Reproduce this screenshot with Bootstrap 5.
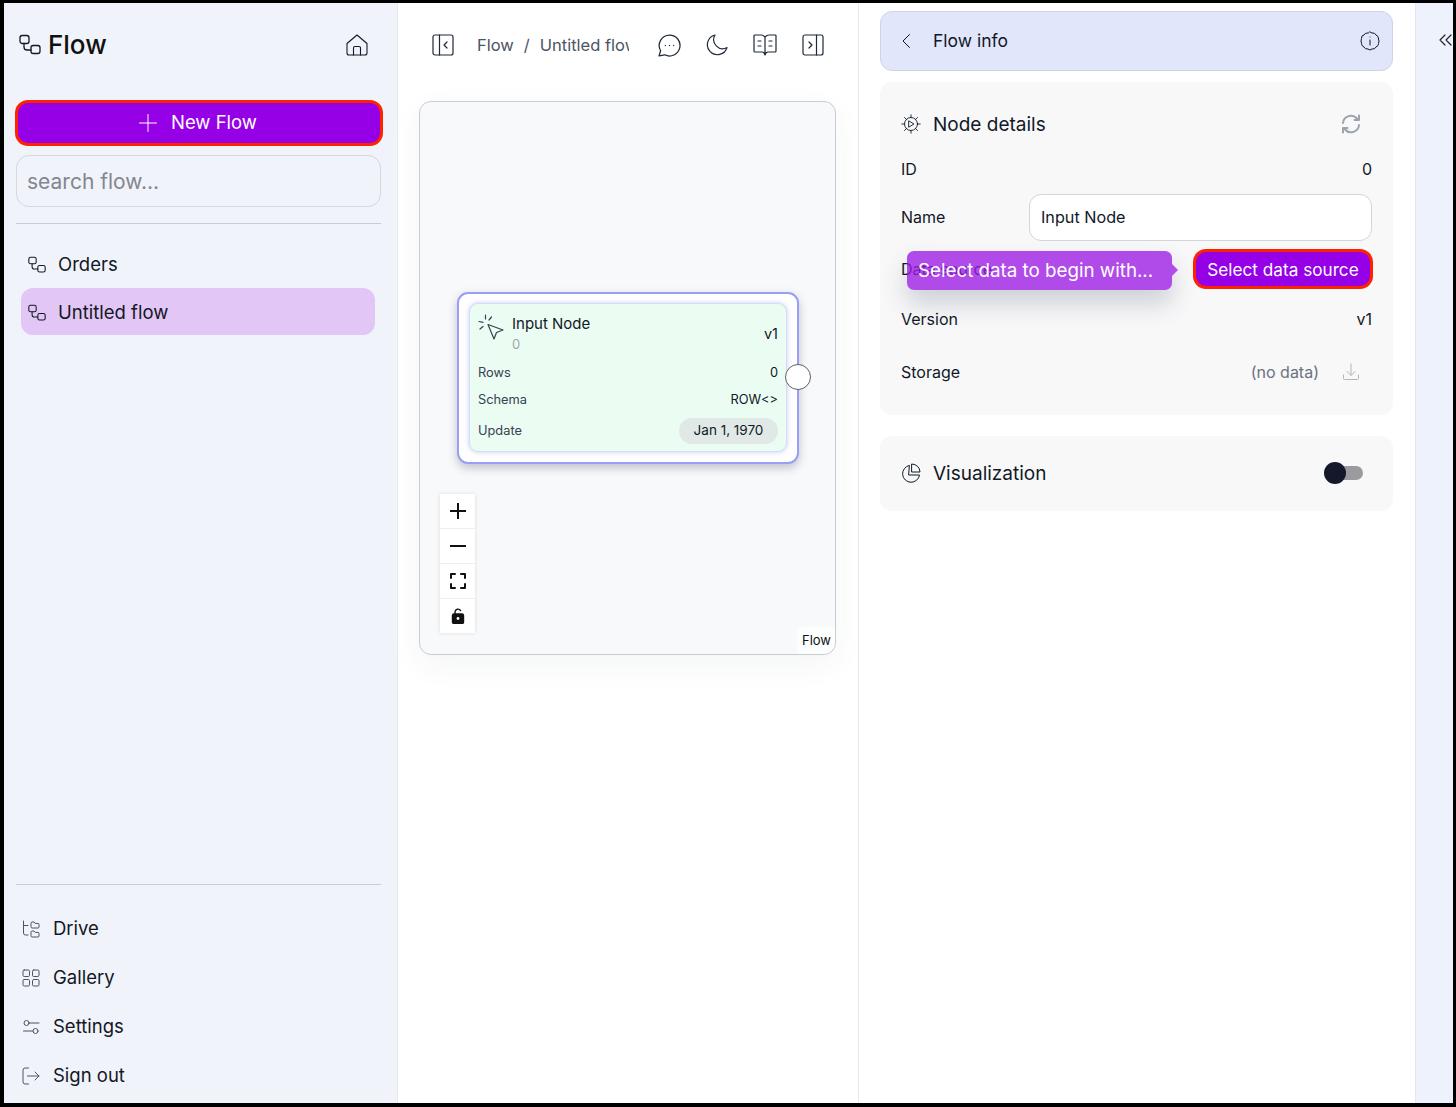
<!DOCTYPE html>
<html lang="en">
<head>
    <meta charset="UTF-8">
    <meta name="viewport" content="width=device-width, initial-scale=1">
    <title>Flow</title>
    <link rel="stylesheet" href="https://cdn.jsdelivr.net/npm/bootstrap@5.3.3/dist/css/bootstrap.min.css">
    <style>
        html, body { height: 100%; }
        body { font-family: Inter, "Liberation Sans", sans-serif; color: #111827; background: #fff; overflow: hidden; }
        svg { display: block; flex: none; fill: none; stroke: currentColor; stroke-linecap: round; stroke-linejoin: round; }

        .app-frame { height: 1107px; border: solid #000; border-width: 3px 3px 4px 4px; display: flex; }

        .side-pane { width: 394px; flex: none; background: #f1f3fb; border-right: 1px solid #e7e9f1; padding: 0 12px; display: flex; flex-direction: column; }
        .brand-row { height: 97px; flex: none; padding: 0 16px 13px 3px; }
        .brand-logo { gap: 7px; }
        .brand-name { font-size: 26px; font-weight: 500; color: #111; line-height: 1; }
        .new-flow { height: 46px; width: 368px; flex: none; margin-left: -1px; padding-right: 14px; background: #9500e6; border: 3px solid #ff2200; border-radius: 13px; color: #fff; font-size: 18.5px; font-weight: 400; }
        .new-flow:hover { background: #9500e6; color: #fff; border-color: #ff2200; }
        .new-flow-text { margin-left: 14px; }
        .search-flow { height: 52px; width: 365px; flex: none; margin-top: 9px; border: 1.5px solid #d5d7dd; border-radius: 13px; background: transparent; font-size: 21px; padding: 0 10px; }
        .search-flow::placeholder { color: #83868e; }
        .side-rule { width: 365px; margin: 16px 0 0; border-top: 1px solid #8f9299; opacity: .4; }
        .flow-list { width: 354px; margin: 16px 0 0 5px; }
        .flow-item { height: 47px; margin-bottom: 1px; padding: 3px 7px 0; border-radius: 12px; font-size: 18.5px; gap: 12px; color: #14171f; }
        .flow-item.is-active { background: #e2c6f5; }
        .side-foot { margin-top: auto; width: 365px; }
        .foot-list { padding: 19px 0 3px 6px; }
        .foot-item { height: 49px; gap: 13px; font-size: 18.5px; color: #14171f; }
        .foot-icon { color: #4b5563; }

        .main-pane { width: 461px; flex: none; border-right: 1px solid #e9eaee; padding: 0 22px 0 21px; }
        .top-tools { height: 98px; padding: 0 12px 14px 13px; color: #1f2937; }
        .crumbs { width: 152px; overflow: hidden; white-space: nowrap; color: #4b5563; font-size: 16.5px; margin-left: 23px; }
        .crumb-sep { margin: 0 10px; }
        .tool-icons { gap: 25px; }
        .flow-canvas { position: relative; width: 417px; height: 554px; background: #f8f9fb; border: 1px solid #c9ccd3; border-radius: 12px; box-shadow: 0 10px 30px rgba(40, 50, 70, .05); }
        .node-shell { position: absolute; left: 37px; top: 190px; width: 342px; height: 172px; background: #fff; border: 2px solid #9a9ef4; border-radius: 11px; box-shadow: 0 4px 10px rgba(60, 70, 90, .3); padding: 9px 10px; }
        .node-card { height: 149px; background: #ebfcf3; border: 1px solid #d5dcf4; border-radius: 9px; box-shadow: 0 0 5px rgba(120, 125, 240, .4); padding: 10px 8px 0; font-size: 12.8px; color: #374151; }
        .node-title { font-size: 15px; color: #111827; line-height: 20px; }
        .node-ver { font-size: 14.5px; color: #111827; }
        .node-id { color: #a3a7ae; font-size: 13px; line-height: 20px; }
        .node-head { height: 39px; margin-bottom: 6px; }
        .node-line { height: 27px; }
        .node-line strong { font-weight: 400; color: #111827; }
        .date-pill { background: #e1e9e6; color: #111827; border-radius: 13px; height: 26px; width: 99px; font-size: 13.5px; display: flex; align-items: center; justify-content: center; }
        .node-port { position: absolute; left: 326px; top: 70px; width: 26px; height: 26px; background: #fff; border: 1.3px solid #5d6169; border-radius: 50%; }
        .zoom-tools { position: absolute; left: 20px; top: 392px; width: 35px; box-shadow: 0 0 4px rgba(0, 0, 0, .12); background: #eee; }
        .zoom-btn { height: 34px; background: #fff; margin-bottom: 1px; color: #111; }
        .zoom-btn:last-child { margin-bottom: 0; }
        .canvas-tag { position: absolute; right: 0; bottom: 0; padding: 4px 4px 5px 5px; background: rgba(255, 255, 255, .6); font-size: 13px; line-height: 18px; color: #111; border-radius: 4px 0 12px 0; }

        .info-pane { width: 556px; flex: none; padding: 8px 22px 0 21px; }
        .info-head { height: 60px; background: #e1e6fb; border: 1px solid #ced4e8; border-radius: 12px; padding: 0 12px 0 20px; font-size: 17.5px; margin-bottom: 11px; }
        .info-label { margin-left: 22px; }
        .detail-box { position: relative; background: #f8f8f9; border-radius: 12px; height: 333px; padding: 0 21px; font-size: 16px; margin-bottom: 21px; }
        .detail-title { height: 84px; padding: 2px 11px 0 0; font-size: 19px; }
        .detail-title svg { margin-top: -2px; }
        .title-text { margin-left: 12px; }
        .row-id { height: 24px; margin-top: -9px; }
        .row-name { height: 46px; margin-top: 13px; }
        .name-input { width: 343px; height: 47px; border: 1.5px solid #d3d5da; border-radius: 12px; background: #fff; font-size: 16.2px; padding: 0 11px; color: #111827; }
        .row-source { height: 40px; margin-top: 9px; }
        .source-btn { height: 40px; width: 180px; margin-right: -1px; padding: 1px 0 0; background: #9500e6; border: 3px solid #ff2200; border-radius: 13px; color: #fff; font-size: 17.2px; }
        .source-btn:hover { background: #9500e6; color: #fff; border-color: #ff2200; }
        .row-version { height: 24px; margin-top: 18px; }
        .row-storage { height: 24px; margin-top: 29px; }
        .no-data { color: #6b7280; margin-right: 23px; }
        .storage-icon { color: #b0b4bb; margin-right: 12px; }
        .hint-tip { position: absolute; left: 27px; top: 169px; width: 265px; height: 39px; padding: 1px 0 0 11px; background: rgba(155, 25, 230, .78); color: #fff; border-radius: 7px; font-size: 18.75px; white-space: nowrap; box-shadow: 0 14px 24px rgba(60, 70, 90, .22); }
        .hint-tip::after { content: ""; position: absolute; left: 100%; top: 13px; border: 6px solid transparent; border-left-color: #b14bec; }
        .viz-box { background: #f8f8f9; border-radius: 12px; height: 75px; padding: 2px 30px 0 21px; font-size: 19px; }
        .viz-icon { margin-top: -3px; }
        .viz-switch { position: relative; width: 30px; height: 14px; margin-top: -4px; background: #9b9b9f; border-radius: 7px; }
        .viz-switch::before { content: ""; position: absolute; left: -9px; top: -4px; width: 22px; height: 22px; border-radius: 50%; background: #14182a; }

        .edge-pane { flex: 1; background: #eef2fd; border-left: 1px solid #e3e7f4; overflow: hidden; position: relative; }
        .edge-arrow { position: absolute; left: 23px; top: 31px; color: #222; }
    </style>
</head>
<body>
    <div class="app-frame">

        <aside class="side-pane">
            <div class="brand-row d-flex align-items-center justify-content-between">
                <div class="brand-logo d-flex align-items-center">
                    <svg width="22" height="22" viewBox="0 0 22 22" stroke-width="1.3"><rect x="1" y="1.5" width="9" height="8" rx="2.2"/><rect x="12" y="11.5" width="9" height="8" rx="2.2"/><path d="M5 9.5v3.5a3 3 0 0 0 3 3h4"/></svg>
                    <span class="brand-name">Flow</span>
                </div>
                <svg width="24" height="24" viewBox="0 0 24 24" stroke-width="1.1"><path d="M2 20V10.5L12 2l10 8.5V20a2 2 0 0 1-2 2H4a2 2 0 0 1-2-2z"/><path d="M8.5 22v-7a1.5 1.5 0 0 1 1.5-1.5h4a1.5 1.5 0 0 1 1.5 1.5v7"/></svg>
            </div>

            <button class="btn new-flow d-flex align-items-center justify-content-center" type="button">
                <svg width="18" height="18" viewBox="0 0 18 18" stroke-width="1"><path d="M9 .5v17M.5 9h17"/></svg>
                <span class="new-flow-text">New Flow</span>
            </button>
            <input class="form-control search-flow" type="text" placeholder="search flow...">
            <hr class="side-rule">

            <div class="flow-list">
                <div class="flow-item d-flex align-items-center">
                    <svg width="18" height="18" viewBox="0 0 22 22" stroke-width="1.3"><rect x="1" y="1.5" width="9" height="8" rx="2.2"/><rect x="12" y="11.5" width="9" height="8" rx="2.2"/><path d="M5 9.5v3.5a3 3 0 0 0 3 3h4"/></svg>
                    <span>Orders</span>
                </div>
                <div class="flow-item is-active d-flex align-items-center">
                    <svg width="18" height="18" viewBox="0 0 22 22" stroke-width="1.3"><rect x="1" y="1.5" width="9" height="8" rx="2.2"/><rect x="12" y="11.5" width="9" height="8" rx="2.2"/><path d="M5 9.5v3.5a3 3 0 0 0 3 3h4"/></svg>
                    <span>Untitled flow</span>
                </div>
            </div>

            <div class="side-foot">
                <hr class="side-rule m-0">
                <div class="foot-list">
                    <div class="foot-item d-flex align-items-center">
                        <svg class="foot-icon" width="18" height="18" viewBox="0 0 18 18"><path d="M1.5 1v12a2 2 0 0 0 2 2H6M1.5 5.5H6"/><path d="M9 3a1 1 0 0 1 1-1h2l1.2 1.4H16a1 1 0 0 1 1 1V7a1 1 0 0 1-1 1h-6a1 1 0 0 1-1-1zM9 12a1 1 0 0 1 1-1h2l1.2 1.4H16a1 1 0 0 1 1 1V16a1 1 0 0 1-1 1h-6a1 1 0 0 1-1-1z"/></svg>
                        <span>Drive</span>
                    </div>
                    <div class="foot-item d-flex align-items-center">
                        <svg class="foot-icon" width="18" height="18" viewBox="0 0 18 18"><rect x="1" y="1" width="6.5" height="6.5" rx="1.2"/><rect x="10.5" y="1" width="6.5" height="6.5" rx="1.2"/><rect x="1" y="10.5" width="6.5" height="6.5" rx="1.2"/><rect x="10.5" y="10.5" width="6.5" height="6.5" rx="1.2"/></svg>
                        <span>Gallery</span>
                    </div>
                    <div class="foot-item d-flex align-items-center">
                        <svg class="foot-icon" width="18" height="18" viewBox="0 0 18 18"><circle cx="4.5" cy="5" r="2.5"/><path d="M7 5h10M1.5 13H11"/><circle cx="13.5" cy="13" r="2.5"/></svg>
                        <span>Settings</span>
                    </div>
                    <div class="foot-item d-flex align-items-center">
                        <svg class="foot-icon" width="18" height="18" viewBox="0 0 18 18"><path d="M6.5 1H3a2 2 0 0 0-2 2v12a2 2 0 0 0 2 2h3.5"/><path d="M5.5 9H17M13 5l4 4-4 4"/></svg>
                        <span>Sign out</span>
                    </div>
                </div>
            </div>
        </aside>

        <main class="main-pane">
            <div class="top-tools d-flex align-items-center">
                <svg width="22" height="22" viewBox="0 0 22 22" stroke-width="1.2"><rect x="1" y="1" width="20" height="20" rx="2"/><path d="M7.5 1v20M15 8l-3 3 3 3"/></svg>
                <div class="crumbs"><span>Flow</span><span class="crumb-sep">/</span><span>Untitled flow</span></div>
                <div class="tool-icons d-flex align-items-center ms-auto">
                    <svg width="23" height="23" viewBox="0 0 22 22" stroke-width="1.2"><path d="M11 1a10 10 0 1 1-4.5 18.900L1 21l1.5-5A10 10 0 0 1 11 1z"/><path d="M7 11h.01M11 11h.01M15 11h.01"/></svg>
                    <svg width="22" height="22" viewBox="0 0 22 22" stroke-width="1.2"><path d="M9 1a10 10 0 1 0 12 12.5A9 9 0 0 1 9 1z"/></svg>
                    <svg width="24" height="22" viewBox="0 0 24 22" stroke-width="1.2"><path d="M12 3v18M12 3c-1-1-2-2-4-2H2a1 1 0 0 0-1 1v15a1 1 0 0 0 1 1h7c1.5 0 2.5 1 3 3 .5-2 1.5-3 3-3h7a1 1 0 0 0 1-1V2a1 1 0 0 0-1-1h-6c-2 0-3 1-4 2z"/><path d="M5 7h3M5 12h3M16 7h3M16 12h3"/></svg>
                    <svg width="22" height="22" viewBox="0 0 22 22" stroke-width="1.2"><rect x="1" y="1" width="20" height="20" rx="2"/><path d="M14.5 1v20M7 8l3 3-3 3"/></svg>
                </div>
            </div>

            <div class="flow-canvas">
                <div class="node-shell">
                    <div class="node-card">
                        <div class="node-head d-flex">
                            <svg class="me-2" width="26" height="26" viewBox="0 0 26 26" stroke-width="1.2"><path d="M10 10.5l15 5.5-6.5 2.5-2.500 6.500z"/><path d="M7.5 1v4M1 7.5l4 .8M13.5 3L11 6M5 12.5L2 15"/></svg>
                            <div>
                                <div class="node-title">Input Node</div>
                                <div class="node-id">0</div>
                            </div>
                            <div class="ms-auto align-self-center node-ver">v1</div>
                        </div>
                        <div class="node-line d-flex align-items-center justify-content-between"><span>Rows</span><strong>0</strong></div>
                        <div class="node-line d-flex align-items-center justify-content-between"><span>Schema</span><strong>ROW&lt;&gt;</strong></div>
                        <div class="node-line d-flex align-items-center justify-content-between mt-1"><span>Update</span><span class="date-pill">Jan 1, 1970</span></div>
                    </div>
                    <div class="node-port"></div>
                </div>

                <div class="zoom-tools">
                    <div class="zoom-btn d-flex align-items-center justify-content-center"><svg width="16" height="16" viewBox="0 0 16 16" stroke-width="2"><path d="M8 .5v15M.5 8h15"/></svg></div>
                    <div class="zoom-btn d-flex align-items-center justify-content-center"><svg width="16" height="16" viewBox="0 0 16 16" stroke-width="2"><path d="M.5 8h15"/></svg></div>
                    <div class="zoom-btn d-flex align-items-center justify-content-center"><svg width="16" height="16" viewBox="0 0 16 16" stroke-width="2"><path d="M1 5V1h4M11 1h4v4M15 11v4h-4M5 15H1v-4"/></svg></div>
                    <div class="zoom-btn d-flex align-items-center justify-content-center"><svg width="14" height="16" viewBox="0 0 14 16" stroke-width="1.4"><path d="M4 6V4a3 3 0 0 1 5.5-1.5"/><rect x="1.5" y="6" width="11" height="9.5" rx="1.5" fill="#111" stroke="#111"/><circle cx="7" cy="10.5" r="1.4" fill="#fff" stroke="none"/></svg></div>
                </div>
                <div class="canvas-tag">Flow</div>
            </div>
        </main>

        <section class="info-pane">
            <div class="info-head d-flex align-items-center">
                <svg width="10" height="16" viewBox="0 0 10 16"><path d="M8.5 1.5L2 8l6.500 6.500"/></svg>
                <span class="info-label">Flow info</span>
                <svg class="ms-auto" width="20" height="20" viewBox="0 0 20 20"><path d="M10 1l2 1 2.5.3 1.500 1.700 2 1.500.5 2.500L19 10l-.5 2.500-.5 2-2 1.500-1.500 1.700-2.500.3-2 1-2-1-2.500-.3L4 16l-2-1.500-.5-2L1 10l.5-2.500.5-2.500L4 4l1.500-1.700L8 2z"/><path d="M10 9v5M10 6h.01"/></svg>
            </div>

            <div class="detail-box">
                <div class="detail-title d-flex align-items-center">
                    <svg width="20" height="20" viewBox="0 0 20 20" stroke-width=".9"><circle cx="10" cy="10" r="6.500"/><path d="M8 7l5 3-5 3zM10 .8v2.700M10 16.500v2.700M.8 10h2.700M16.500 10h2.700M3.500 3.500l2 2M14.500 14.500l2 2M16.500 3.500l-2 2M5.500 14.500l-2 2"/></svg>
                    <span class="title-text">Node details</span>
                    <svg class="ms-auto" width="20" height="20" viewBox="0 0 20 20" stroke-width="2" color="#9ca3af"><path d="M2 9a8 8 0 0 1 14-4.500L18 6M18 1.500V6h-4.500M18 11a8 8 0 0 1-14 4.500L2 14M2 18.500V14h4.500"/></svg>
                </div>
                <div class="row-id d-flex align-items-center justify-content-between"><span>ID</span><span>0</span></div>
                <div class="row-name d-flex align-items-center justify-content-between"><span>Name</span><input class="form-control name-input" type="text" value="Input Node"></div>
                <div class="row-source d-flex align-items-center justify-content-between"><span>Data source</span><button class="btn source-btn" type="button">Select data source</button></div>
                <div class="row-version d-flex align-items-center justify-content-between"><span>Version</span><span>v1</span></div>
                <div class="row-storage d-flex align-items-center"><span>Storage</span><span class="no-data ms-auto">(no data)</span><svg class="storage-icon" width="18" height="18" viewBox="0 0 18 18"><path d="M9 1v11M5 8.500l4 4 4-4M1.500 12v3.500a1 1 0 0 0 1 1h13a1 1 0 0 0 1-1V12"/></svg></div>
                <div class="hint-tip d-flex align-items-center">Select data to begin with...</div>
            </div>

            <div class="viz-box d-flex align-items-center">
                <svg class="viz-icon" width="20" height="20" viewBox="0 0 20 20"><path d="M8 2.500A8.500 8.500 0 1 0 18.500 12H8z"/><path d="M11 1a8 8 0 0 1 8 8h-8z"/></svg>
                <span class="title-text">Visualization</span>
                <div class="viz-switch ms-auto"></div>
            </div>
        </section>

        <div class="edge-pane">
            <svg class="edge-arrow" width="16" height="12" viewBox="0 0 16 12" stroke-width="1.2"><path d="M6 1L1 6l5 5M12 1L7 6l5 5"/></svg>
        </div>
    </div>

    <script src="https://cdn.jsdelivr.net/npm/bootstrap@5.3.3/dist/js/bootstrap.bundle.min.js"></script>
</body>
</html>
